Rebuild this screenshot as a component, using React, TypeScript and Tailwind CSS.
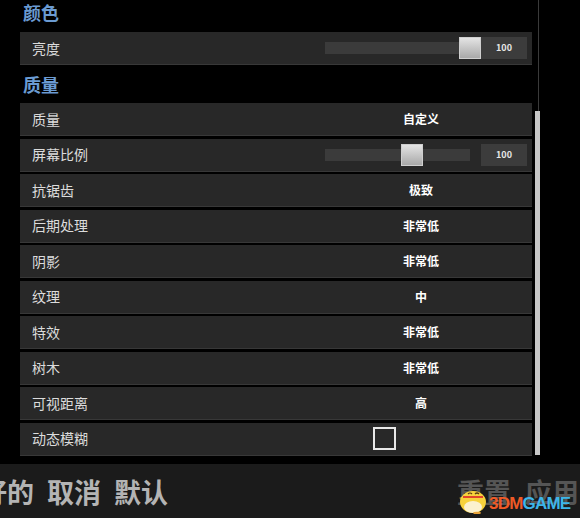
import React from 'react';

type Row =
  | { label: string; kind: 'text'; value: string }
  | { label: string; kind: 'slider'; pos: number; value: string }
  | { label: string; kind: 'check' };

const colorRows: Row[] = [{ label: '亮度', kind: 'slider', pos: 100, value: '100' }];

const qualityRows: Row[] = [
  { label: '质量', kind: 'text', value: '自定义' },
  { label: '屏幕比例', kind: 'slider', pos: 60, value: '100' },
  { label: '抗锯齿', kind: 'text', value: '极致' },
  { label: '后期处理', kind: 'text', value: '非常低' },
  { label: '阴影', kind: 'text', value: '非常低' },
  { label: '纹理', kind: 'text', value: '中' },
  { label: '特效', kind: 'text', value: '非常低' },
  { label: '树木', kind: 'text', value: '非常低' },
  { label: '可视距离', kind: 'text', value: '高' },
  { label: '动态模糊', kind: 'check' },
];

const Slider = ({ pos, value }: { pos: number; value: string }) => (
  <div className="flex items-center h-full pl-[15px] pr-[5px] gap-[11px]">
    <div className="relative w-[145px] h-[12px] bg-[#3b3b3b]">
      <div
        className="absolute top-[-5px] w-[22px] h-[22px] bg-gradient-to-b from-[#e4e4e4] to-[#a9a9a9] border border-[#cfcfcf]"
        style={{ left: `calc(${pos}% - 11px)` }}
      />
    </div>
    <div className="w-[46px] h-[22px] bg-[#3c3c3c] flex items-center justify-center text-[9px] font-bold text-[#e6e6e6]">
      {value}
    </div>
  </div>
);

const SettingRow = ({ row }: { row: Row }) => (
  <div className="flex h-[33px] bg-[#282828] border-b border-[#383838]">
    <div className="flex-1 flex items-center pl-[12px] text-[14px] text-[#dcdcdc]">{row.label}</div>
    <div className="w-[222px] h-full">
      {row.kind === 'text' && (
        <div className="h-full flex items-center justify-center text-[12px] font-bold text-white">{row.value}</div>
      )}
      {row.kind === 'slider' && <Slider pos={row.pos} value={row.value} />}
      {row.kind === 'check' && (
        <div className="h-full flex items-center pl-[63px]">
          <div className="w-[23px] h-[23px] border-2 border-[#e8e8e8]" />
        </div>
      )}
    </div>
  </div>
);

const Chick = () => (
  <svg width="34" height="30" viewBox="0 0 34 30">
    <ellipse cx="18" cy="18" rx="13" ry="11" fill="#f7d23c" />
    <ellipse cx="18" cy="23" rx="9" ry="6" fill="#fbf1cf" />
    <path d="M4 14 L10 12 L10 16 Z" fill="#f7d23c" />
    <path d="M8 13 H28" stroke="#e2452b" strokeWidth="2" />
    <path d="M13 10 Q15 8 17 10 M20 10 Q22 8 24 10" stroke="#5a3a12" strokeWidth="1.2" fill="none" />
    <ellipse cx="22" cy="29" rx="4" ry="1.2" fill="#e9a43a" />
  </svg>
);

export default function App() {
  return (
    <div
      className="w-[580px] h-[518px] bg-black overflow-hidden flex flex-col"
      style={{ fontFamily: '"Noto Sans CJK SC", "Noto Sans", sans-serif' }}
    >
      <div className="h-[464px] flex">
        <div className="w-[532px] pl-[20px]">
          <div className="h-[32px] pl-[3px] pt-[1px] text-[18px] leading-[22px] font-bold text-[#6b9bd2]">颜色</div>
          {colorRows.map((r) => (
            <SettingRow key={r.label} row={r} />
          ))}
          <div className="h-[38px] pl-[3px] pt-[8px] text-[18px] leading-[22px] font-bold text-[#6b9bd2]">质量</div>
          <div className="flex flex-col gap-[2.5px]">
            {qualityRows.map((r) => (
              <SettingRow key={r.label} row={r} />
            ))}
          </div>
        </div>
        <div className="w-[8px] flex flex-col">
          <div className="h-[111px] ml-[6px] w-[1px] bg-[#3a3a3a]" />
          <div className="h-[344px] ml-[3px] w-[5px] bg-[#c6c6c6]" />
        </div>
      </div>

      <div className="relative flex-1 bg-[#1b1b1b] flex items-center">
        <div className="flex gap-[13px] ml-[-20px] text-[27px] leading-none font-bold text-[#b4b4b4]">
          <span>好的</span>
          <span>取消</span>
          <span>默认</span>
        </div>
        <div className="ml-auto flex gap-[14px] text-[27px] leading-none font-bold text-[#555555] mr-[1px]">
          <span>重置</span>
          <span>应用</span>
        </div>
        <div className="absolute left-[455px] top-[20px] flex items-end">
          <Chick />
          <span
            className="text-[17px] leading-none font-bold tracking-[-0.8px] mb-[2px]"
            style={{ fontFamily: '"Liberation Sans", Arial, sans-serif' }}
          >
            <span className="text-[#ef5a26]">3DM</span>
            <span className="text-[#3db6ea]">GAME</span>
          </span>
        </div>
      </div>
    </div>
  );
}
